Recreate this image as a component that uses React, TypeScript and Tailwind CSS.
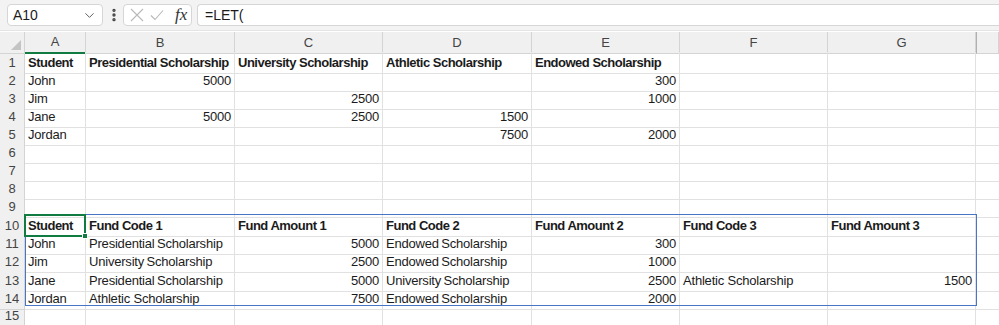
import { ChevronDown, EllipsisVertical } from "lucide-react";

const COLS = ["A", "B", "C", "D", "E", "F", "G", ""];
const GRID = "grid grid-cols-[25px_61px_149px_148px_149px_148px_148px_148px_23px]";

// rows 1-15, "" = empty cell, "~" prefix = tight word spacing
const ROWS: string[][] = [
  ["Student", "Presidential Scholarship", "University Scholarship", "Athletic Scholarship", "Endowed Scholarship", "", ""],
  ["John", "5000", "", "", "300", "", ""],
  ["Jim", "", "2500", "", "1000", "", ""],
  ["Jane", "5000", "2500", "1500", "", "", ""],
  ["Jordan", "", "", "7500", "2000", "", ""],
  ["", "", "", "", "", "", ""],
  ["", "", "", "", "", "", ""],
  ["", "", "", "", "", "", ""],
  ["", "", "", "", "", "", ""],
  ["Student", "Fund Code 1", "Fund Amount 1", "Fund Code 2", "Fund Amount 2", "Fund Code 3", "Fund Amount 3"],
  ["John", "~Presidential Scholarship", "5000", "~Endowed Scholarship", "300", "", ""],
  ["Jim", "~University Scholarship", "2500", "~Endowed Scholarship", "1000", "", ""],
  ["Jane", "~Presidential Scholarship", "5000", "~University Scholarship", "2500", "Athletic Scholarship", "1500"],
  ["Jordan", "Athletic Scholarship", "7500", "~Endowed Scholarship", "2000", "", ""],
  ["", "", "", "", "", "", ""],
];
const HEIGHTS = [18, 18, 18, 18, 19, 18, 18, 18, 18, 18, 18, 19, 18, 18, 18];
const BOLD_ROWS = [1, 10];

function Row({ n }: { n: number }) {
  const cells = ROWS[n - 1];
  const bold = BOLD_ROWS.includes(n);
  return (
    <div className={GRID} style={{ height: HEIGHTS[n - 1] }}>
      <div className="flex items-center justify-center bg-[#f0f0f0] border-r border-b border-[#d4d4d4] text-[13px] text-[#444]">
        {n}
      </div>
      {cells.map((c, i) => {
        const tight = c.startsWith("~");
        const text = tight ? c.slice(1) : c;
        const num = /^\d+$/.test(text);
        return (
          <div
            key={i}
            className={`relative flex items-center border-r border-b border-[#e1e1e1] pt-px whitespace-nowrap overflow-visible text-[13px] text-[#1b1b1b] ${
              num ? "justify-end pr-[3px]" : "pl-[3px]"
            } ${bold ? "font-bold tracking-[-0.5px]" : "tracking-[-0.2px]"} ${tight ? "[word-spacing:-1px]" : ""}`}
          >
            {text}
            {n === 10 && i === 0 && (
              <div className="absolute z-10 -top-px -left-px -right-px -bottom-px border-2 border-[#107c41] pointer-events-none">
                <div className="absolute -right-[4px] -bottom-[4px] w-[6px] h-[6px] bg-[#107c41] border border-white" />
              </div>
            )}
          </div>
        );
      })}
      <div className="border-b border-[#e1e1e1]" />
    </div>
  );
}

export default function App() {
  return (
    <div className="w-[999px] h-[325px] overflow-hidden bg-white font-['Liberation_Sans',Arial,sans-serif]">
      {/* Formula bar */}
      <div className="flex items-center h-[31px] bg-[#f3f3f3] pl-[7px] border-b border-[#e4e4e4]">
        <div className="flex items-center justify-between w-[96px] h-[22px] rounded-[4px] border border-[#d6d6d6] bg-white pl-[5px] pr-[5px]">
          <span className="text-[14px] text-[#1b1b1b]">A10</span>
          <ChevronDown size={15} strokeWidth={1.5} className="text-[#555]" />
        </div>
        <EllipsisVertical size={16} strokeWidth={3} className="text-[#444] ml-[3px]" />
        <div className="flex items-center w-[69px] h-[22px] ml-[1px] rounded-[4px] border border-[#d6d6d6] bg-white pl-[6px]">
          <svg width="14" height="14" viewBox="0 0 14 14" fill="none" stroke="#b8b8b8" strokeWidth="1.1">
            <path d="M1 1L13 13M13 1L1 13" />
          </svg>
          <svg width="14" height="14" viewBox="0 0 14 14" fill="none" stroke="#b8b8b8" strokeWidth="1.1" className="ml-[6px]">
            <path d="M1 7.5L5 11.5L13 2.5" />
          </svg>
          <span className="ml-[11px] text-[17px] italic text-[#333] font-['Liberation_Serif',serif]">fx</span>
        </div>
        <div className="flex items-center flex-1 h-[22px] ml-[5px] rounded-l-[4px] border border-r-0 border-[#d6d6d6] bg-white pl-[7px] text-[14px] text-[#1b1b1b]">
          =LET(
        </div>
      </div>
      <div className="h-[1px]" />

      {/* Column headers */}
      <div className={`${GRID} h-[20px]`}>
        <div className="relative bg-[#f0f0f0] border-r border-b border-[#d4d4d4]">
          <div className="absolute right-[3px] bottom-[3px] w-0 h-0 border-l-[10px] border-l-transparent border-b-[10px] border-b-[#c4c4c4]" />
        </div>
        {COLS.map((c, i) => (
          <div
            key={i}
            className={`flex items-center justify-center bg-[#f0f0f0] text-[13px] text-[#444] ${
              i === 0 ? "border-b-2 border-[#107c41] border-r border-r-[#d4d4d4]" : "border-r border-b border-[#d4d4d4]"
            } ${i === 7 ? "border-l border-l-[#b0b0b0]" : ""}`}
          >
            {c}
          </div>
        ))}
      </div>

      {[1, 2, 3, 4, 5, 6, 7, 8, 9].map((n) => (
        <Row key={n} n={n} />
      ))}
      {/* Table block */}
      <div className="relative">
        {[10, 11, 12, 13, 14].map((n) => (
          <Row key={n} n={n} />
        ))}
        <div className="absolute -top-px bottom-0 left-[25px] w-[952px] border border-[#4b74c4] pointer-events-none" />
      </div>
      <Row n={15} />
    </div>
  );
}
